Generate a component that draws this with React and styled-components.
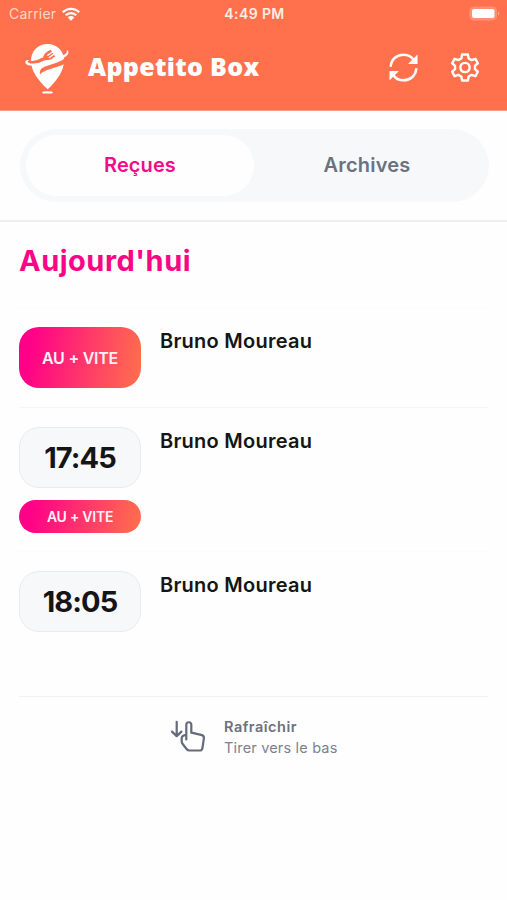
import React from "react";
import styled, { createGlobalStyle } from "styled-components";

const GlobalStyle = createGlobalStyle`
  * { box-sizing: border-box; }
  body { margin: 0; background: #fefefe; font-family: Inter, "Liberation Sans", sans-serif; }
`;

const Screen = styled.div`
  width: 507px;
  height: 900px;
  overflow: hidden;
  background: #fefefe;
`;

const Header = styled.header`
  height: 111px;
  background: #ff714d;
  border-bottom: 1px solid #ff9a80;
  color: #fff;
`;

const StatusBar = styled.div`
  height: 27px;
  padding: 0 7px 0 9px;
  display: grid;
  grid-template-columns: 1fr auto 1fr;
  align-items: center;
  color: #ffece6;
`;

const Carrier = styled.div`
  display: flex;
  align-items: center;
  gap: 6px;
  font-size: 14px;
  letter-spacing: 0.2px;
  color: #ffd5c9;
`;

const Clock = styled.div`
  font-size: 14px;
  font-weight: 600;
  letter-spacing: 0.4px;
`;

const BatteryIcon = styled.svg`
  justify-self: end;
`;

const Brand = styled.div`
  display: flex;
  align-items: center;
  height: 83px;
  padding: 0 28px 0 24px;
`;

const BrandName = styled.h1`
  flex: 1;
  margin: 0 0 6px 16px;
  font-family: "Open Sans", sans-serif;
  font-size: 25px;
  line-height: 34px;
  font-weight: 800;
  white-space: nowrap;
  letter-spacing: 0.3px;
`;

const Actions = styled.div`
  display: flex;
  gap: 33px;
  margin-bottom: 2px;
`;

const TabArea = styled.div`
  height: 111px;
  padding: 18px 18px 19px 20px;
  border-bottom: 2px solid #efeff1;
`;

const Tabs = styled.nav`
  height: 73px;
  padding: 6px 7px 6px 6px;
  border-radius: 37px;
  background: #f6f8fa;
  display: grid;
  grid-template-columns: 228px 1fr;
`;

const Tab = styled.button`
  border: 0;
  padding: ${(p) => (p.$active ? "0 0 2px" : "0 2px 2px 0")};
  border-radius: 31px;
  font: 600 20px/28px Inter, sans-serif;
  letter-spacing: ${(p) => p.$track};
  color: ${(p) => (p.$active ? "#f50a8c" : "#6b727e")};
  background: ${(p) => (p.$active ? "#fefefe" : "transparent")};
`;

const Content = styled.main`
  padding: 0 19px;
`;

const DayTitle = styled.h2`
  margin: 0;
  height: 85px;
  padding-top: 17px;
  font-size: 29px;
  line-height: 44px;
  font-weight: 650;
  letter-spacing: 0.5px;
  color: #fa0586;
`;

const OrderRow = styled.article`
  height: ${(p) => p.$height}px;
  padding-top: 19px;
  border-top: 1px solid ${(p) => (p.$faint ? "#fbfbfc" : "#f5f5f6")};
  display: flex;
  align-items: flex-start;
  gap: 19px;
`;

const Slot = styled.div`
  width: 122px;
  display: flex;
  flex-direction: column;
  gap: 12px;
`;

const Chip = styled.div`
  height: 61px;
  border-radius: 20px;
  display: flex;
  align-items: center;
  justify-content: center;
  white-space: nowrap;
`;

const TimeChip = styled(Chip)`
  background: #f7f8fa;
  border: 1px solid #e9ebee;
  color: #151515;
  font-size: 29px;
  font-weight: 650;
  letter-spacing: -0.9px;
`;

const UrgentChip = styled(Chip)`
  height: ${(p) => (p.$small ? 33 : 61)}px;
  background: linear-gradient(100deg, #ff0088 10%, #ff714b 100%);
  color: #fff1f6;
  font-size: ${(p) => (p.$small ? "14px" : "16px")};
  font-weight: 600;
  letter-spacing: -0.25px;
`;

const Customer = styled.h3`
  margin: 0;
  font-size: 20px;
  line-height: 28px;
  font-weight: 600;
  letter-spacing: 0.25px;
  color: #151515;
  white-space: nowrap;
`;

const RefreshHint = styled.footer`
  border-top: 1px solid #f1f1f3;
  padding: 19px 0 0 151px;
  display: flex;
  gap: 17px;
  color: #6b7180;
  font-size: 14.5px;
  line-height: 21px;
`;

const HintTitle = styled.div`
  font-weight: 600;
  letter-spacing: 0.5px;
`;

const HintText = styled.div`
  letter-spacing: 0.18px;
  color: #7c8290;
`;

const PullIcon = styled.svg`
  margin-top: 3px;
`;

const Logo = () => (
  <svg width="48" height="52" viewBox="0 0 48 52">
    <path fill="#fff" d="M23.500 1C33 1 40 8 40 17.500 40 28 33 37.500 23.700 46.200 14 37.500 7 28 7 17.500 7 8 14 1 23.500 1Z" />
    <path fill="#ff714d" d="M5 17.600c6 1.200 9.500-1.200 13-2.800l1.400 3c-4.400 2.600-9 3.800-14.400 2.600Z" />
    <path fill="#ff714d" d="M17 15.600c2.800-1 2.300-2.800 3.600-4.600 1.500-1.900 4-3.200 6-4.200l4.600 6.600c-2 1.400-4.200 3.200-6.600 3.700-2.400.3-3.600-.3-6 1.200Z" />
    <path fill="none" stroke="#fff" strokeWidth="1.300" strokeLinecap="round" d="M23.800 12.300l5-3.600M25.300 14.500l5-3.600" />
    <path fill="#ff714d" d="M16 31.200C15.200 27.600 17 25.400 20.500 23.800c5.500-2.200 12-3.200 20.500-8.300v5.300C35.500 23.300 31 24.500 26.500 26c-4.600 1.500-7.500 2.800-10.500 5.200Z" />
    <path fill="#fff" d="M5.500 17.300C2.500 16 .8 18 1.300 19.700c1 3 6 3.500 10.700 2.300 5.500-1.600 9.500-1.500 14-2.200 5-.8 9.500-2.600 14-5.200 4.200-2.300 6-5.400 3-7.600-.4 2 .2 3.500-3 4.800-4.500 2-7.500 5-11.500 5.900-3.300.8-6 .3-9.500 1.400C13.500 20.800 7 21.600 4 19.200c-.6-.8.3-1.600 1.500-1.900Z" />
    <ellipse cx="23.500" cy="49.400" rx="5.400" ry="1.200" fill="#fff" />
  </svg>
);

const Wifi = () => (
  <svg width="18" height="14" viewBox="0 0 18 14" fill="none" stroke="#fff" strokeWidth="2.2">
    <path d="M.8 5.3C5.2.7 12.8.7 17.2 5.3M3.7 8.3c2.9-3 7.7-3 10.6 0" />
    <path fill="#fff" stroke="none" d="M5.8 10.4a4.6 4.6 0 0 1 6.4 0L9 13.7Z" />
  </svg>
);

const Battery = () => (
  <BatteryIcon width="31" height="15" viewBox="0 0 31 15">
    <rect x="1" y="1" width="26.5" height="13" rx="4" fill="#ff8e70" stroke="#ff9378" />
    <rect x="3" y="3" width="22.5" height="9" rx="2" fill="#fff" />
    <path d="M29 5.5c1.8.7 1.8 3.3 0 4Z" fill="#ffa690" />
  </BatteryIcon>
);

const Sync = () => (
  <svg width="29" height="29" viewBox="0 0 30 30" fill="none" stroke="#fff" strokeWidth="2.6">
    <path d="M1.800 14.200C2 6.900 8 1.700 15 1.700c4.700 0 8.500 2.100 10.800 5.800M28.200 15.800C28 23.100 22 28.300 15 28.300c-4.700 0-8.500-2.100-10.800-5.800" />
    <path fill="#fff" stroke="none" d="M29.500 1.500v9.800h-9.800ZM.5 28.500v-9.800h9.800Z" />
  </svg>
);

const Gear = () => (
  <svg width="28" height="29" viewBox="0 0 29 30" fill="none" stroke="#fff" strokeWidth="2.500" strokeLinejoin="round">
    <path d="M11.500 1.500h6l.8 4.200 3 1.700 4-1.400 2.500 4.600-3 2.700v3.400l3 2.700-2.500 4.600-4-1.400-3 1.700-.8 4.200h-6l-.8-4.200-3-1.700-4 1.400-2.500-4.600 3-2.700v-3.400l-3-2.700L3.700 6l4 1.400 3-1.700Z" />
    <circle cx="14.500" cy="15" r="4.800" />
  </svg>
);

const PullDown = () => (
  <PullIcon width="37" height="34" viewBox="0 0 37 34" fill="none" stroke="#636a7a" strokeWidth="2.200" strokeLinecap="round" strokeLinejoin="round">
    <path d="M6.700 2.800v14M2 12.600l4.700 4.500 4.700-4.500" />
    <path d="M16.300 20.500V5.800c0-3.400 5-3.400 5 0v7.900l9.800 2.100c2 .4 3 1.500 2.800 3.300l-1.500 10.200c-.2 1.500-1.100 2.200-2.700 2.200H19.500c-1.200 0-2-.3-2.700-1.200l-4.300-5.500c-.6-.8-.8-1.300-.8-2.200v-3.200c0-2 1.800-3.200 4.600-3.500" />
  </PullIcon>
);

const orders = [
  { id: 1, urgent: true, height: 100, faint: true },
  { id: 2, time: "17:45", urgent: true, height: 144 },
  { id: 3, time: "18:05", height: 145, faint: true },
];

export default function App() {
  return (
    <Screen>
      <GlobalStyle />
      <Header>
        <StatusBar>
          <Carrier>Carrier <Wifi /></Carrier>
          <Clock>4:49 PM</Clock>
          <Battery />
        </StatusBar>
        <Brand>
          <Logo />
          <BrandName>Appetito Box</BrandName>
          <Actions><Sync /><Gear /></Actions>
        </Brand>
      </Header>
      <TabArea>
        <Tabs>
          <Tab $active $track="0.1px">Reçues</Tab>
          <Tab $track="0.2px">Archives</Tab>
        </Tabs>
      </TabArea>
      <Content>
        <DayTitle>Aujourd'hui</DayTitle>
        {orders.map((o) => (
          <OrderRow key={o.id} $height={o.height} $faint={o.faint}>
            <Slot>
              {o.time && <TimeChip>{o.time}</TimeChip>}
              {o.urgent && <UrgentChip $small={Boolean(o.time)}>AU + VITE</UrgentChip>}
            </Slot>
            <Customer>Bruno Moureau</Customer>
          </OrderRow>
        ))}
        <RefreshHint>
          <PullDown />
          <div>
            <HintTitle>Rafraîchir</HintTitle>
            <HintText>Tirer vers le bas</HintText>
          </div>
        </RefreshHint>
      </Content>
    </Screen>
  );
}
